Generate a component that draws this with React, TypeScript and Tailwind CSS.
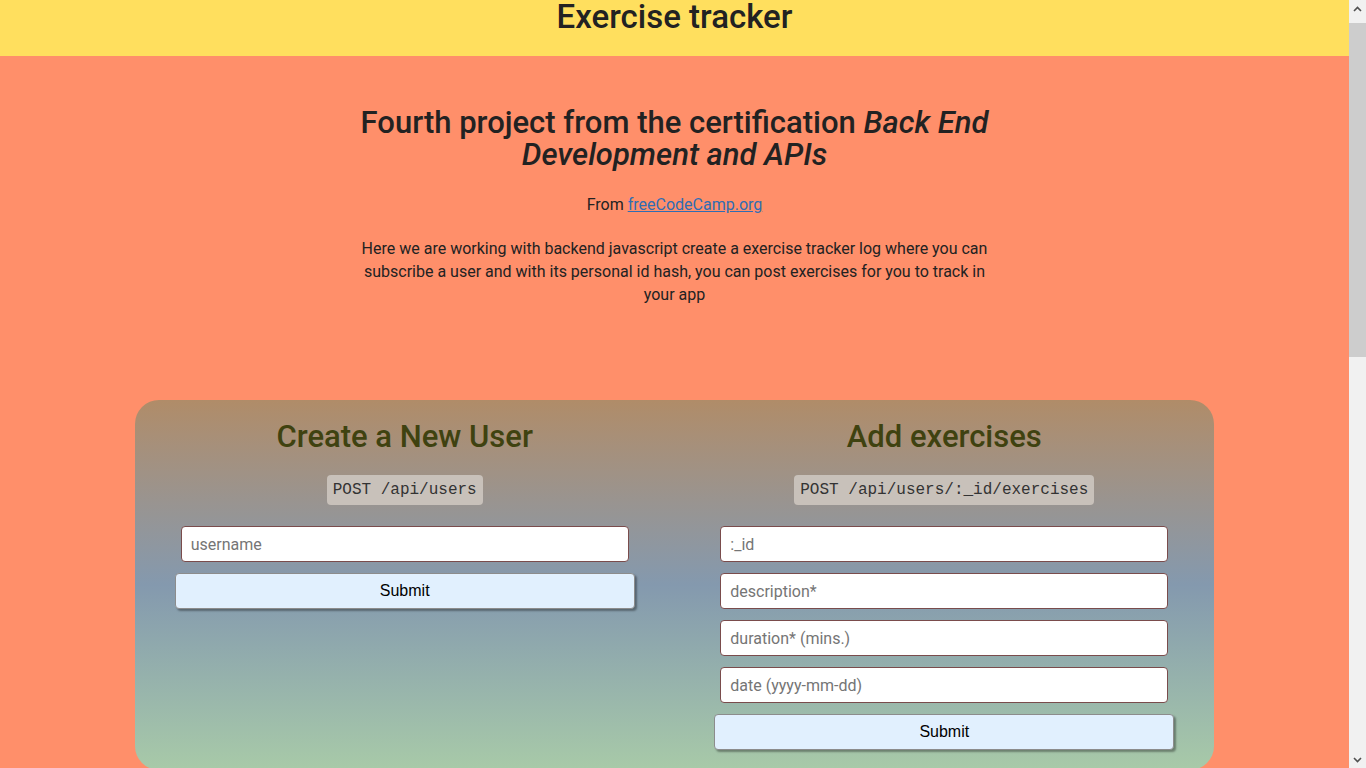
import React from 'react';

const inputClass =
  'h-[36px] w-[448px] rounded-[4px] border border-[#7a4c4c] bg-white px-[9px] text-[16px] text-[#222] placeholder:text-[#757575] outline-none';

const buttonClass =
  'h-[36px] w-[460px] rounded-[4px] border border-[#8c8c8c] bg-[#e1f0fe] text-[16px] text-black shadow-[2px_2px_2px_rgba(0,0,0,0.35)] font-["Liberation_Sans",Arial,sans-serif]';

const Endpoint: React.FC<{ path: string }> = ({ path }) => (
  <code className="mt-[20px] rounded-[4px] bg-[#c8c1ba] px-[6px] py-[6px] text-[16px] leading-[18px] text-[#333] font-['Liberation_Mono','Courier_New',monospace]">
    {path}
  </code>
);

const FormColumn: React.FC<{ title: string; path: string; fields: string[] }> = ({ title, path, fields }) => (
  <form className="flex flex-col items-center" onSubmit={(e) => e.preventDefault()}>
    <h2 className="text-[31px] font-medium leading-[36px] text-[#3f4210]">{title}</h2>
    <Endpoint path={path} />
    <div className="mt-[21px] flex flex-col items-center gap-[11px]">
      {fields.map((f) => (
        <input key={f} type="text" placeholder={f} className={inputClass} />
      ))}
      <button type="submit" className={buttonClass}>
        Submit
      </button>
    </div>
  </form>
);

// the browser's scrollbar, as it shows in the screenshot
const ScrollTrack: React.FC = () => (
  <aside className="flex h-screen w-[17px] shrink-0 flex-col bg-[#f1f1f1]">
    <div className="flex h-[17px] items-center justify-center">
      <svg width="9" height="6" viewBox="0 0 9 6" fill="none" stroke="#505050" strokeWidth="1.6">
        <path d="M1 5l3.5-3.5L8 5" />
      </svg>
    </div>
    <div className="mt-[6px] h-[334px] bg-[#cdcdcd]" />
    <div className="flex-1" />
    <div className="flex h-[17px] items-center justify-center">
      <svg width="9" height="6" viewBox="0 0 9 6" fill="none" stroke="#505050" strokeWidth="1.6">
        <path d="M1 1l3.5 3.5L8 1" />
      </svg>
    </div>
  </aside>
);

export default function App() {
  return (
    <div className="flex h-screen overflow-hidden bg-[#ff8f6a] font-['Roboto','Liberation_Sans',sans-serif] text-[#222]">
      <div className="min-w-0 flex-1">
        <header className="h-[56px] bg-[#ffdf5e] text-center">
          <h1 className="text-[33px] font-medium leading-none">Exercise tracker</h1>
        </header>

        <section className="mx-auto w-[648px] pt-[51px] text-center">
          <h2 className="text-[31px] font-medium leading-[32px]">
            Fourth project from the certification <em>Back End Development and APIs</em>
          </h2>
          <p className="mt-[22px] text-[16px] leading-[24px]">
            From{' '}
            <a href="#" className="text-[#2f6db3] underline">
              freeCodeCamp.org
            </a>
          </p>
          <p className="mt-[20px] text-[16px] leading-[23px]">
            Here we are working with backend javascript create a exercise tracker log where you can subscribe a user
            and with its personal id hash, you can post exercises for you to track in your app
          </p>
        </section>

        <main className="mx-auto mt-[94px] grid w-4/5 grid-cols-2 rounded-[24px] bg-gradient-to-b from-[#b08c68] via-[#8499ae] to-[#a8caa8] pt-[19px] pb-[20px]">
          <div className="self-start">
            <FormColumn title="Create a New User" path="POST /api/users" fields={['username']} />
          </div>
          <FormColumn
            title="Add exercises"
            path="POST /api/users/:_id/exercises"
            fields={[':_id', 'description*', 'duration* (mins.)', 'date (yyyy-mm-dd)']}
          />
        </main>
      </div>
      <ScrollTrack />
    </div>
  );
}
